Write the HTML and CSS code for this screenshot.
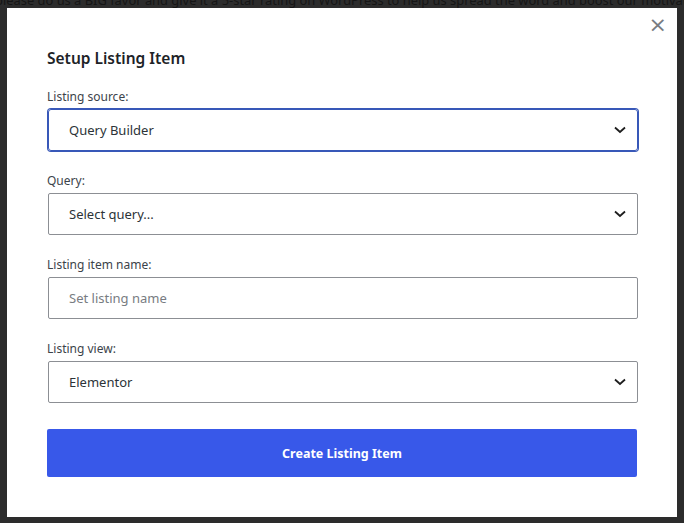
FILE: index.html
```html
<!DOCTYPE html>
<html lang="en">
<head>
  <meta charset="UTF-8" />
  <meta name="viewport" content="width=device-width, initial-scale=1.0"/>
  <title>Setup Listing Item</title>
  <link rel="stylesheet" href="styles.css">
</head>
<body>
  <div class="backdrop">
    <p class="notice">please do us a BIG favor and give it a 5-star rating on WordPress to help us spread the word and boost our motivation</p>
  </div>

  <div class="modal">
    <button class="close" title="Close">&times;</button>
    <h2 class="modal-title">Setup Listing Item</h2>

    <form class="setup-form">
      <div class="field">
        <label>Listing source:</label>
        <div class="select focused">
          <span>Query Builder</span>
          <svg class="chevron" width="12" height="8" viewBox="0 0 12 8"><path d="M1 1.5 L6 6 L11 1.5" fill="none" stroke="#1e1e1e" stroke-width="1.8"/></svg>
        </div>
      </div>

      <div class="field">
        <label>Query:</label>
        <div class="select">
          <span>Select query...</span>
          <svg class="chevron" width="12" height="8" viewBox="0 0 12 8"><path d="M1 1.5 L6 6 L11 1.5" fill="none" stroke="#1e1e1e" stroke-width="1.8"/></svg>
        </div>
      </div>

      <div class="field">
        <label>Listing item name:</label>
        <div class="select">
          <span class="placeholder">Set listing name</span>
        </div>
      </div>

      <div class="field">
        <label>Listing view:</label>
        <div class="select">
          <span>Elementor</span>
          <svg class="chevron" width="12" height="8" viewBox="0 0 12 8"><path d="M1 1.5 L6 6 L11 1.5" fill="none" stroke="#1e1e1e" stroke-width="1.8"/></svg>
        </div>
      </div>

      <button type="button" class="create-btn">Create Listing Item</button>
    </form>
  </div>
</body>
</html>
```

FILE: styles.css
```css
body {
  margin: 0;
  width: 684px;
  height: 523px;
  overflow: hidden;
  background: #2c2c2c;
  font-family: "Noto Sans", "Open Sans", sans-serif;
  color: #1e1e1e;
  position: relative;
}
.backdrop {
  height: 8px;
  overflow: hidden;
}
.notice {
  margin: -8px 0 0 -5px;
  font-size: 12.9px;
  line-height: 16px;
  white-space: nowrap;
  color: #151515;
}
.modal {
  position: absolute;
  left: 7px;
  top: 8px;
  width: 670px;
  height: 509px;
  box-sizing: border-box;
  background: #fff;
  padding: 38px 39px 0 41px;
}
.close {
  position: absolute;
  top: 6px;
  right: 10px;
  border: none;
  background: none;
  padding: 0;
  font-size: 22px;
  line-height: 22px;
  color: #787c82;
  font-family: "DejaVu Sans", sans-serif;
  cursor: pointer;
}
.modal-title {
  margin: 0 0 0 -1px;
  font-size: 15.5px;
  line-height: 24px;
  font-weight: 600;
  color: #1d2327;
}
.setup-form {
  margin-top: 18px;
  display: flex;
  flex-direction: column;
  gap: 21px;
}
.field {
  display: flex;
  flex-direction: column;
  gap: 3px;
}
.field label {
  margin-left: -1px;
  font-size: 12px;
  line-height: 18px;
  color: #3c434a;
}
.select {
  height: 42px;
  box-sizing: border-box;
  border: 1px solid #8c8f94;
  border-radius: 2px;
  display: flex;
  align-items: center;
  justify-content: space-between;
  padding: 0 11px 0 20px;
  font-size: 13px;
  color: #2c3338;
}
.select.focused {
  border-color: #3858b8;
  box-shadow: 0 0 0 1px #3858b8;
  border-radius: 3px;
}
.placeholder {
  color: #787c82;
}
.create-btn {
  margin: 5px 1px 0 -1px;
  height: 48px;
  border: none;
  border-radius: 2px;
  background: #3858e9;
  color: #fff;
  font-family: inherit;
  font-size: 12.5px;
  font-weight: 700;
  cursor: pointer;
}
```
